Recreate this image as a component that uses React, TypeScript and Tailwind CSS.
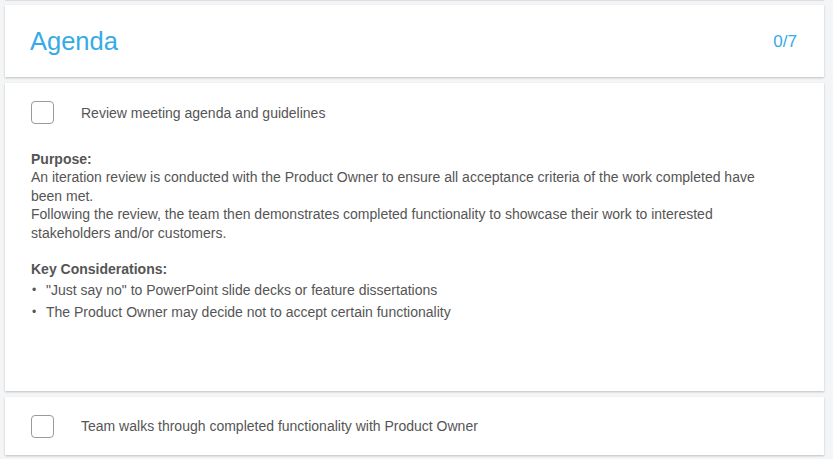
import React from "react";

function Box() {
  return <div className="w-[23px] h-[23px] shrink-0 rounded-[4px] border-[1.5px] border-[#9a9a9a] bg-white" />;
}

export default function App() {
  return (
    <div className="min-h-[459px] w-[833px] bg-[#f4f5f7] font-['Liberation_Sans',Arial,sans-serif] text-[#555555]">
      <div className="flex flex-col gap-[6px] pl-[5px] pr-[9px]">
        <div className="h-[1px] bg-[#dcdde0]" />
        <div className="mt-[-2px] flex h-[72px] items-center justify-between bg-white pl-[25px] pr-[27px] shadow-[0_1px_2px_rgba(0,0,0,0.22)]">
          <span className="text-[25.5px] leading-none text-[#36abe6] mt-[1px]">Agenda</span>
          <span className="text-[17px] leading-none text-[#36abe6]">0/7</span>
        </div>
        <div className="h-[308px] bg-white pl-[26px] pr-[40px] pt-[18px] shadow-[0_1px_2px_rgba(0,0,0,0.22)]">
          <div className="flex items-center gap-[27px]">
            <Box />
            <span className="text-[14px] leading-none">Review meeting agenda and guidelines</span>
          </div>
          <div className="mt-[26px] text-[14px] leading-[18.4px]">
            <div className="font-bold">Purpose:</div>
            <div>
              An iteration review is conducted with the Product Owner to ensure all acceptance criteria of the work completed have been met.
            </div>
            <div>
              Following the review, the team then demonstrates completed functionality to showcase their work to interested stakeholders and/or customers.
            </div>
            <div className="h-[18px]" />
            <div className="font-bold">Key Considerations:</div>
            <ul className="mt-[1px]">
              <li className="flex leading-[22px]"><span className="w-[15px] pl-[1px] text-[12px]">•</span><span>"Just say no" to PowerPoint slide decks or feature dissertations</span></li>
              <li className="flex leading-[22px]"><span className="w-[15px] pl-[1px] text-[12px]">•</span><span>The Product Owner may decide not to accept certain functionality</span></li>
            </ul>
          </div>
        </div>
        <div className="flex h-[58px] items-center gap-[27px] bg-white pl-[26px] shadow-[0_1px_2px_rgba(0,0,0,0.22)]">
          <Box />
          <span className="text-[14px] leading-none">Team walks through completed functionality with Product Owner</span>
        </div>
      </div>
    </div>
  );
}
